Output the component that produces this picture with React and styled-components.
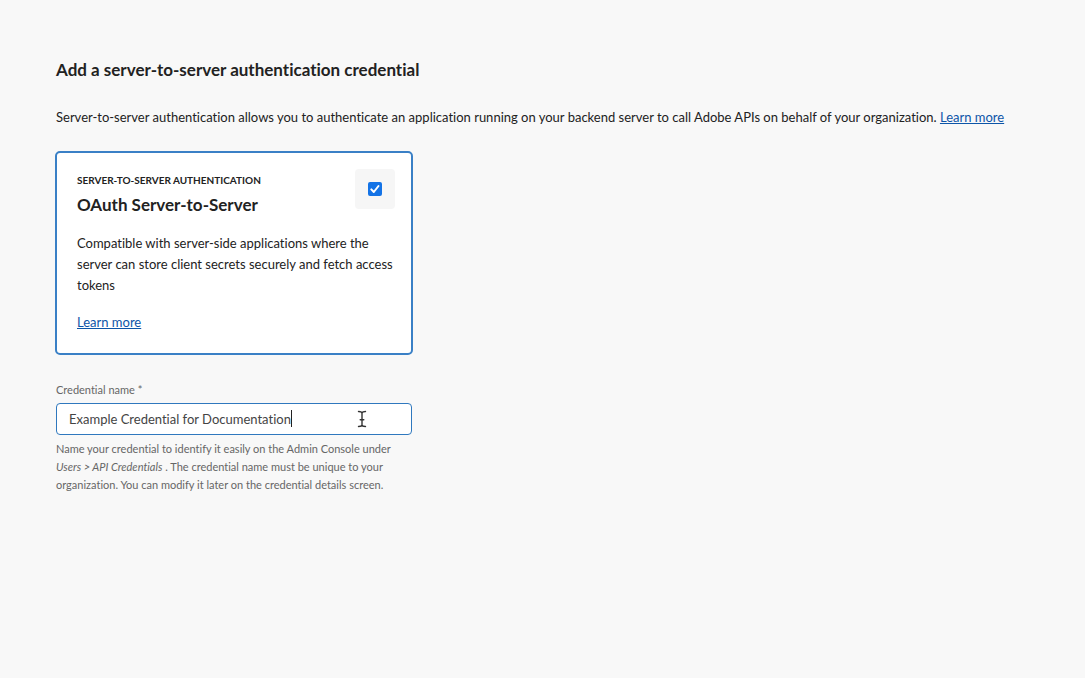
import React, { useState } from 'react';
import styled, { createGlobalStyle } from 'styled-components';

const GlobalStyle = createGlobalStyle`
  * { box-sizing: border-box; }
  body {
    margin: 0;
    background: #f8f8f8;
    color: #222;
    font: 13px/21px Lato, "Noto Sans", sans-serif;
    font-variant-ligatures: none;
  }
`;

const Page = styled.main`
  padding: 58px 56px;
`;

const Title = styled.h1`
  margin: 0 0 25px;
  font-size: 17px;
  line-height: 24px;
  font-weight: 700;
`;

const Text = styled.p`
  margin: 0 0 ${({ $gap }) => $gap}px;
`;

const Link = styled.a`
  color: #0d55a8;
  text-decoration: underline;
  text-underline-offset: 1px;
`;

const Column = styled.div`
  max-width: 356px;
`;

const Card = styled.section`
  display: flex;
  flex-direction: column;
  margin: 0 -1px 26px;
  padding: 16px 16px 20px 20px;
  border: 2px solid #3a80c6;
  border-radius: 5px;
  background: #fff;
`;

const CardTop = styled.div`
  display: flex;
  justify-content: space-between;
  margin-bottom: 16px;
`;

const Eyebrow = styled.div`
  padding-top: 3px;
  font-size: 10px;
  line-height: 16px;
  font-weight: 700;
`;

const CardTitle = styled.h2`
  margin: 5px 0 0;
  font-size: 17px;
  line-height: 24px;
  font-weight: 700;
`;

const CheckTile = styled.label`
  display: flex;
  align-items: center;
  justify-content: center;
  width: 40px;
  height: 40px;
  border-radius: 4px;
  background: #f6f6f6;
`;

const Box = styled.span`
  position: relative;
  display: flex;
  width: 14px;
  height: 14px;
`;

const Checkbox = styled.input`
  appearance: none;
  width: 14px;
  height: 14px;
  margin: 0;
  border: 2px solid #1473e6;
  border-radius: 2px;
  background: #fff;

  &:checked { background: #1473e6; }
  &:not(:checked) + svg { display: none; }
`;

const Tick = styled.svg`
  position: absolute;
  inset: 0;
  pointer-events: none;
`;

const Field = styled.div`
  display: flex;
  flex-direction: column;
  color: #666;
  font-size: 11px;
  line-height: 18px;
`;

const FieldLabel = styled.label`
  margin-bottom: 4px;
`;

const InputWrap = styled.div`
  position: relative;
  display: flex;
  margin-bottom: 5px;
`;

const Input = styled.input`
  width: 100%;
  height: 32px;
  padding: 0 12px 1px;
  border: 1px solid #2f78be;
  border-radius: 4px;
  outline: none;
  background: #fff;
  color: #444;
  font: inherit;
  font-size: 13px;
  font-variant-ligatures: none;
`;

const Caret = styled.span`
  position: absolute;
  top: 7px;
  left: 235px;
  width: 1px;
  height: 17px;
  background: #222;
`;

const Pointer = styled.svg`
  position: absolute;
  top: 7px;
  right: 45px;
  pointer-events: none;
`;

const Hint = styled.p`
  margin: 0;
`;

export default function App() {
  const [selected, setSelected] = useState(true);
  const [name, setName] = useState('Example Credential for Documentation');

  return (
    <Page>
      <GlobalStyle />
      <Title>Add a server-to-server authentication credential</Title>
      <Text $gap={23}>
        Server-to-server authentication allows you to authenticate an application running on your
        backend server to call Adobe APIs on behalf of your organization.{' '}
        <Link href="#about">Learn more</Link>
      </Text>
      <Column>
        <Card>
          <CardTop>
            <div>
              <Eyebrow>SERVER-TO-SERVER AUTHENTICATION</Eyebrow>
              <CardTitle id="oauth-title">OAuth Server-to-Server</CardTitle>
            </div>
            <CheckTile htmlFor="oauth">
              <Box>
                <Checkbox
                  id="oauth"
                  type="checkbox"
                  aria-labelledby="oauth-title"
                  checked={selected}
                  onChange={(e) => setSelected(e.target.checked)}
                />
                <Tick width="14" height="14" viewBox="0 0 14 14" aria-hidden="true">
                  <path
                    d="M3.3 7.4 L5.8 10 L10.5 4"
                    fill="none"
                    stroke="#fff"
                    strokeWidth="2"
                    strokeLinecap="round"
                    strokeLinejoin="round"
                  />
                </Tick>
              </Box>
            </CheckTile>
          </CardTop>
          <Text $gap={16}>
            Compatible with server-side applications where the server can store client secrets
            securely and fetch access tokens
          </Text>
          <div>
            <Link href="#oauth-docs">Learn more</Link>
          </div>
        </Card>
        <Field>
          <FieldLabel htmlFor="credential">Credential name *</FieldLabel>
          <InputWrap>
            <Input
              id="credential"
              type="text"
              aria-describedby="credential-hint"
              value={name}
              onChange={(e) => setName(e.target.value)}
            />
            <Caret />
            <Pointer width="10" height="18" viewBox="0 0 10 18" aria-hidden="true">
              <path
                d="M1.5 1.5 C3.2 1.5 5 1.9 5 3.3 C5 1.9 6.8 1.5 8.5 1.5 M5 3 V15 M1.5 16.5 C3.2 16.5 5 16.1 5 14.7 C5 16.1 6.8 16.5 8.5 16.5 M3.2 9.7 H6.8"
                fill="none"
                stroke="#333"
                strokeWidth="1.4"
                strokeLinecap="round"
              />
            </Pointer>
          </InputWrap>
          <Hint id="credential-hint">
            Name your credential to identify it easily on the Admin Console under{' '}
            <em>Users &gt; API Credentials</em> . The credential name must be unique to your
            organization. You can modify it later on the credential details screen.
          </Hint>
        </Field>
      </Column>
    </Page>
  );
}
